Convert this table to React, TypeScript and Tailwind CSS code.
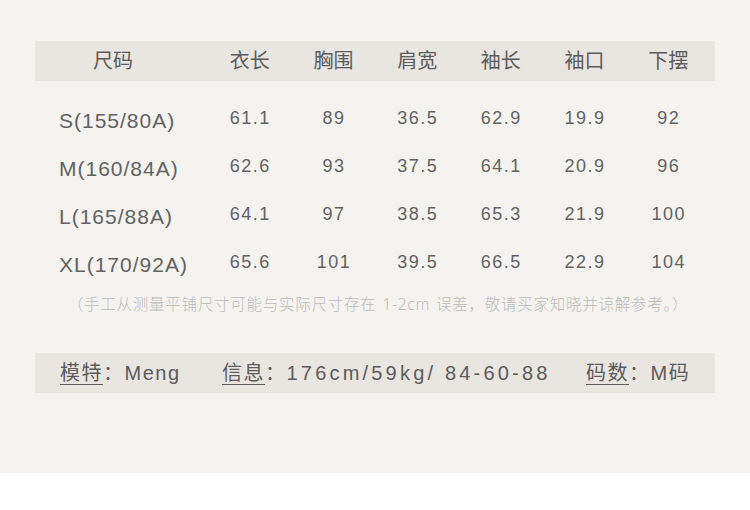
import React from 'react';

const columns = ['衣长', '胸围', '肩宽', '袖长', '袖口', '下摆'];

const rows = [
  { size: 'S(155/80A)', values: ['61.1', '89', '36.5', '62.9', '19.9', '92'] },
  { size: 'M(160/84A)', values: ['62.6', '93', '37.5', '64.1', '20.9', '96'] },
  { size: 'L(165/88A)', values: ['64.1', '97', '38.5', '65.3', '21.9', '100'] },
  { size: 'XL(170/92A)', values: ['65.6', '101', '39.5', '66.5', '22.9', '104'] },
];

const font = {
  fontFamily: '"Liberation Sans", "Noto Sans CJK SC", sans-serif',
};

const App: React.FC = () => {
  return (
    <div className="w-[750px] h-[510px] bg-white" style={font}>
      <div className="h-[473px] bg-[#f5f3ef] pt-[41px] px-[35px]">
        {/* Header */}
        <div className="grid grid-cols-[173px_repeat(6,1fr)] pr-[5px] h-[40px] bg-[#e9e5e0] text-[20px] text-[#5c5c5c]">
          <div className="flex items-center pl-[58px]">尺码</div>
          {columns.map((c) => (
            <div key={c} className="flex items-center justify-center">
              {c}
            </div>
          ))}
        </div>

        {/* Size rows */}
        <div className="mt-[13px]">
          {rows.map((r) => (
            <div
              key={r.size}
              className="grid grid-cols-[173px_repeat(6,1fr)] pr-[5px] h-[48px] items-center text-[#626262]"
            >
              <div className="pl-[24px] mt-[6px] text-[21px] tracking-[1px]">{r.size}</div>
              {r.values.map((v, i) => (
                <div key={i} className="text-center text-[18px] tracking-[1.5px] pl-[1px]">
                  {v}
                </div>
              ))}
            </div>
          ))}
        </div>

        {/* Note */}
        <div className="mt-[9px] h-[20px] flex items-center justify-center pl-[6px] text-[15.5px] tracking-[0.75px] text-[#bcbcbc] font-light">
          （手工从测量平铺尺寸可能与实际尺寸存在<span className="font-[Noto_Sans] font-light px-[6px]">1-2cm</span>误差，敬请买家知晓并谅解参考。）
        </div>

        {/* Model info */}
        <div className="mt-[38px] h-[40px] bg-[#e9e5e0] flex items-center text-[20px] tracking-[1.5px] text-[#5c5c5c]">
          <div className="w-[187px] pl-[25px]">
            <span className="underline underline-offset-[4px] decoration-1">模特</span>：Meng
          </div>
          <div className="w-[364px]">
            <span className="underline underline-offset-[4px] decoration-1">信息</span>：
            <span className="tracking-[3.2px]">176cm/59kg/ 84-60-88</span>
          </div>
          <div>
            <span className="underline underline-offset-[4px] decoration-1">码数</span>：M码
          </div>
        </div>
      </div>
    </div>
  );
};

export default App;
